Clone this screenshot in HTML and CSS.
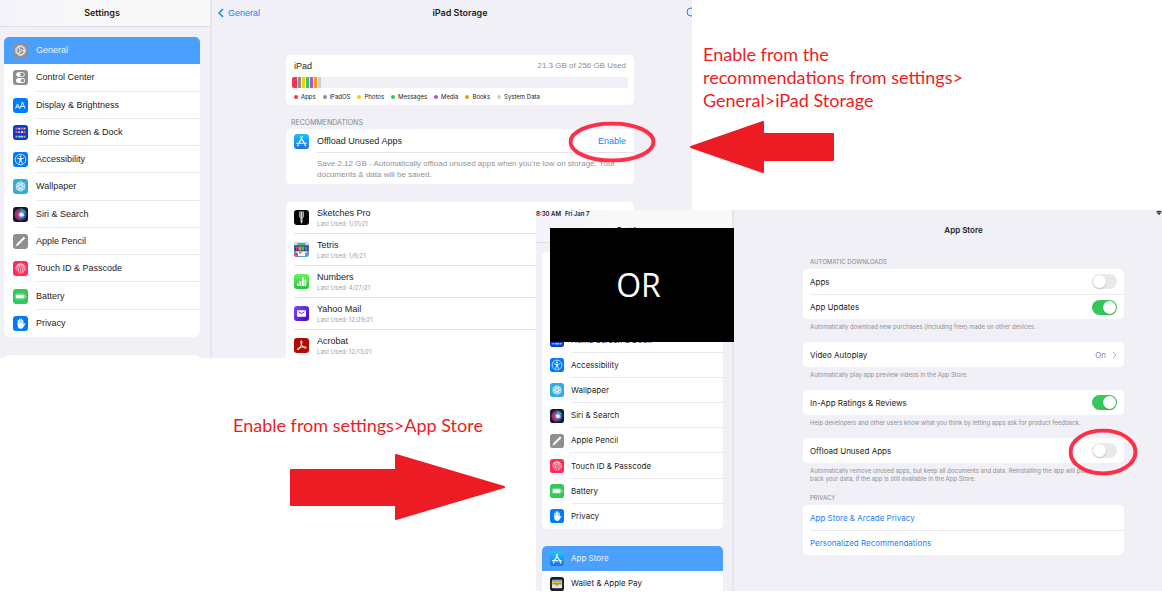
FILE: index.html
```html
<!DOCTYPE html>
<html lang="en">
<head>
<meta charset="utf-8">
<meta name="viewport" content="width=device-width, initial-scale=1">
<title>Offload Unused Apps</title>
<link rel="stylesheet" href="styles.css">
</head>
<body>
<svg class="sprite" aria-hidden="true">
  <defs>
    <linearGradient id="g-store" x1="0" y1="0" x2="0" y2="1"><stop offset="0" stop-color="#19c4fb"/><stop offset="1" stop-color="#1b70f2"/></linearGradient>
    <linearGradient id="g-num" x1="0" y1="0" x2="0" y2="1"><stop offset="0" stop-color="#6df05f"/><stop offset="1" stop-color="#1fc83a"/></linearGradient>
    <linearGradient id="g-mail" x1="0" y1="0" x2="1" y2="1"><stop offset="0" stop-color="#7a4bff"/><stop offset="1" stop-color="#4a00c8"/></linearGradient>
    <radialGradient id="g-siri" cx=".55" cy=".5" r=".6"><stop offset="0" stop-color="#fff"/><stop offset=".25" stop-color="#7fb6ee"/><stop offset=".55" stop-color="#3b4fae"/><stop offset="1" stop-color="#11162e"/></radialGradient>
    <symbol id="i-general" viewBox="0 0 30 30"><rect width="30" height="30" rx="6" fill="#8e8e93"/><circle cx="15" cy="15" r="10" fill="none" stroke="#fff" stroke-width="2" stroke-dasharray="2 1.14"/><circle cx="15" cy="15" r="8" fill="none" stroke="#fff" stroke-width="2"/><circle cx="15" cy="15" r="2.5" fill="none" stroke="#fff" stroke-width="1.5"/><path d="M17.5 15H23M13.8 12.8 11 8M13.8 17.2 11 22" stroke="#fff" stroke-width="1.7"/></symbol>
    <symbol id="i-control" viewBox="0 0 30 30"><rect width="30" height="30" rx="6" fill="#8e8e93"/><rect x="7" y="5" width="16" height="8" rx="4" fill="none" stroke="#fff" stroke-width="1.5"/><circle cx="11" cy="9" r="4" fill="#fff"/><rect x="6" y="16" width="18" height="10" rx="5" fill="#fff"/><circle cx="19" cy="21" r="3.4" fill="#8e8e93"/></symbol>
    <symbol id="i-display" viewBox="0 0 30 30"><rect width="30" height="30" rx="6" fill="#007aff"/><path d="m5 21 4-9 4 9M6.5 18h5M14 21l5-13 5 13M16 17h6.500" fill="none" stroke="#fff" stroke-width="1.8"/></symbol>
    <symbol id="i-home" viewBox="0 0 30 30"><rect width="30" height="30" rx="6" fill="#1238cf"/><g stroke-width="3.5"><path d="M5 7h4M21 14h4" stroke="#ff6a5c"/><path d="M10.500 7h4M16 14h4" stroke="#e9f0ff"/><path d="M16 7h4M5 14h4" stroke="#ff5aa8"/><path d="M21 7h4M10.500 14h4" stroke="#f5c343"/><path d="M5 23h4" stroke="#5ee57b"/><path d="M10.500 23h9.500" stroke="#7fd8ff"/><path d="M21 23h4" stroke="#ffa63d"/></g></symbol>
    <symbol id="i-access" viewBox="0 0 30 30"><rect width="30" height="30" rx="6" fill="#007aff"/><circle cx="15" cy="15" r="10.500" fill="none" stroke="#fff" stroke-width="1.500"/><circle cx="15" cy="9" r="1.800" fill="#fff"/><path d="M9 12.500 13.500 13.500h3L21 12.500M13.800 13.500v3.500L12 22.500M16.200 13.500v3.500L18 22.500M15 13v5" fill="none" stroke="#fff" stroke-width="1.700" stroke-linecap="round"/></symbol>
    <symbol id="i-wall" viewBox="0 0 30 30"><rect width="30" height="30" rx="6" fill="#35abdb"/><g fill="#fff" fill-opacity=".3" stroke="#fff" stroke-width="1.200"><circle cx="15" cy="9.500" r="4"/><circle cx="19.800" cy="12.200" r="4"/><circle cx="19.800" cy="17.800" r="4"/><circle cx="15" cy="20.500" r="4"/><circle cx="10.200" cy="17.800" r="4"/><circle cx="10.200" cy="12.200" r="4"/></g><circle cx="15" cy="15" r="2.500" fill="#35abdb" stroke="#fff"/></symbol>
    <symbol id="i-siri" viewBox="0 0 30 30"><rect width="30" height="30" rx="6" fill="#15182b"/><circle cx="15" cy="15" r="12.500" fill="url(#g-siri)"/><path d="M3 15C3 8 9 3 15 3c-4 4-4 8 0 12-3 4-2 8 1 12C9 27 3 22 3 15Z" fill="#e0246c" opacity=".65"/><path d="M15 3c7 0 11 5 12 10-4-3-8-3-12 1Z" fill="#30c7a8" opacity=".55"/><path d="m11 14 8-3 4 7-9 1Z" fill="#fff" opacity=".75"/></symbol>
    <symbol id="i-pencil" viewBox="0 0 30 30"><rect width="30" height="30" rx="6" fill="#8e8e93"/><path d="M5 25 8 19 21.500 5.500 24.500 8.500 11 22Z" fill="#fff"/></symbol>
    <symbol id="i-touch" viewBox="0 0 30 30"><rect width="30" height="30" rx="6" fill="#ff2d55"/><g fill="none" stroke="#fff" stroke-width="1.300" stroke-linecap="round"><path d="M7 10a10 10 0 0 1 16 0M5.500 15a9.500 9.500 0 0 1 19 0v3M8 19v-4a7 7 0 0 1 14 0c0 3 0 5-1.500 8M10.500 22c.8-2 .5-4 .5-7a4 4 0 0 1 8 0c0 4 0 6-2 9.500M15 15c0 4 0 6-1.500 9.500"/></g></symbol>
    <symbol id="i-battery" viewBox="0 0 30 30"><rect width="30" height="30" rx="6" fill="#34c759"/><rect x="4.500" y="10" width="19.500" height="10" rx="3" fill="none" stroke="#fff" stroke-opacity=".7"/><rect x="6" y="11.500" width="16.500" height="7" rx="1.500" fill="#fff"/><path d="M25.500 13v4c2-.8 2-3.200 0-4Z" fill="#fff"/></symbol>
    <symbol id="i-privacy" viewBox="0 0 30 30"><rect width="30" height="30" rx="6" fill="#007aff"/><path d="M10.500 17V9M13.500 16V6M16.500 16V6M19.500 17V8.500" stroke="#fff" stroke-width="2.300" stroke-linecap="round"/><path d="M9.300 14.500h11.400V18l2.300-3c1-1 2.200 0 1.500 1.200L21 22c-1.500 2.500-3 3.500-5.500 3.500-4 0-6.200-2.500-6.200-6Z" fill="#fff"/></symbol>
    <symbol id="i-store" viewBox="0 0 30 30"><rect width="30" height="30" rx="6" fill="url(#g-store)"/><path d="m16.500 6-7 12.500M13.500 6 21 19.500M5.500 18.500h11.500M20 18.500h4.500M8.500 21.500 7.500 23.500M22 21.500l1 2" stroke="#fff" stroke-width="2.400" stroke-linecap="round"/></symbol>
    <symbol id="i-wallet" viewBox="0 0 30 30"><rect width="30" height="30" rx="6" fill="#1c1c1e"/><rect x="4" y="6" width="22" height="18" rx="2" fill="#e9e3d5"/><path d="M5 8.500h20" stroke="#3fa3d8" stroke-width="3"/><path d="M5 11.500h20" stroke="#f7b92c" stroke-width="3"/><path d="M5 14.500h20" stroke="#5bbd58" stroke-width="3"/><path d="M12 16h6c0 2-1 3-3 3s-3-1-3-3Z" fill="#ef5a4c"/></symbol>
    <symbol id="i-sketch" viewBox="0 0 30 30"><rect width="30" height="30" rx="6" fill="#080808"/><path d="M10.500 3h9v10l-2.500 5v5l-2 5-2-5v-5l-2.500-5Z" fill="#d8d8d8"/><path d="M13 3v12M17 3v12M13 18h4" stroke="#333" stroke-width="1.200"/></symbol>
    <symbol id="i-tetris" viewBox="0 0 30 30"><rect width="30" height="30" rx="6" fill="#5b9fd0"/><path d="M0 6a6 6 0 0 1 6-6h18a6 6 0 0 1 6 6H0Z" fill="#cfe2e6"/><path d="M7 2h16v4H7Z" fill="#48b887"/><path d="M1 7h28v11H1Z" fill="#243a91"/><path d="M3 9h5v3H6.500v5H4v-5H3Z" fill="#e84a4c"/><path d="M9 9h5v8H9Z" fill="#f29a35"/><path d="M15 9h6v3l-2 5h-4Z" fill="#46c764"/><path d="M22 9h5v8h-5Z" fill="#a84ac9"/><path d="M3 19h24l-5 4v5H8v-5Z" fill="#f3f7fc"/><path d="M0 22h8v8H6a6 6 0 0 1-6-6Z" fill="#d65465"/><path d="M10 19h5v4h-5Z" fill="#e96d3a"/></symbol>
    <symbol id="i-numbers" viewBox="0 0 30 30"><rect width="30" height="30" rx="6" fill="url(#g-num)"/><path d="M6 19h3.500v5H6ZM11 14h3.500v10H11ZM16 7h3.500v17H16ZM21 11h3.500v13H21Z" fill="#fff"/></symbol>
    <symbol id="i-mail" viewBox="0 0 30 30"><rect width="30" height="30" rx="6" fill="url(#g-mail)"/><rect x="6" y="8.500" width="18" height="13" rx="1.500" fill="#fff"/><path d="m9 11.500 6 3.500 6-3.500" fill="none" stroke="#5a1fe0" stroke-width="2"/></symbol>
    <symbol id="i-acrobat" viewBox="0 0 30 30"><rect width="30" height="30" rx="6" fill="#b30b00"/><path d="M14.500 5.500c2 0 2 3 .5 7-1.500 4.500-4.500 10.500-7 11-2.500.2-1-3.500 6-5 7-1.800 11-1 10.500 1s-5 .5-8-4-4-10-2-10Z" fill="none" stroke="#fff" stroke-width="1.900"/></symbol>
  </defs>
</svg>

<main class="board">
  <section class="window window-storage" aria-label="iPad Storage">
    <nav class="sidebar" aria-label="Settings">
      <header class="sidebar-head"><h2>Settings</h2></header>
      <div class="group group-main">
        <a class="item selected" href="#"><svg class="icon"><use href="#i-general"/></svg><span>General</span></a>
        <a class="item" href="#"><svg class="icon"><use href="#i-control"/></svg><span>Control Center</span></a>
        <a class="item" href="#"><svg class="icon"><use href="#i-display"/></svg><span>Display &amp; Brightness</span></a>
        <a class="item" href="#"><svg class="icon"><use href="#i-home"/></svg><span>Home Screen &amp; Dock</span></a>
        <a class="item" href="#"><svg class="icon"><use href="#i-access"/></svg><span>Accessibility</span></a>
        <a class="item" href="#"><svg class="icon"><use href="#i-wall"/></svg><span>Wallpaper</span></a>
        <a class="item" href="#"><svg class="icon"><use href="#i-siri"/></svg><span>Siri &amp; Search</span></a>
        <a class="item" href="#"><svg class="icon"><use href="#i-pencil"/></svg><span>Apple Pencil</span></a>
        <a class="item" href="#"><svg class="icon"><use href="#i-touch"/></svg><span>Touch ID &amp; Passcode</span></a>
        <a class="item" href="#"><svg class="icon"><use href="#i-battery"/></svg><span>Battery</span></a>
        <a class="item" href="#"><svg class="icon"><use href="#i-privacy"/></svg><span>Privacy</span></a>
      </div>
      <div class="group group-next"></div>
    </nav>
    <div class="pane">
      <header class="pane-head">
        <a class="back" href="#"><svg viewBox="0 0 6 10"><path d="M5 1 1 5l4 4" fill="none" stroke="currentColor" stroke-width="1.500"/></svg>General</a>
        <h1>iPad Storage</h1>
        <button class="search" type="button" aria-label="Search"><svg viewBox="0 0 12 12"><circle cx="5" cy="5" r="4" fill="none" stroke="currentColor"/><path d="m8 8 3 3" stroke="currentColor"/></svg></button>
      </header>
      <div class="card usage">
        <div class="usage-top"><span>iPad</span><span class="muted">21.3 GB of 256 GB Used</span></div>
        <div class="bar"><i class="seg wide red"></i><i class="seg gray"></i><i class="seg yellow"></i><i class="seg green"></i><i class="seg purple"></i><i class="seg orange"></i><i class="seg silver"></i></div>
        <ul class="legend">
          <li><i class="dot red"></i>Apps</li><li><i class="dot gray"></i>iPadOS</li><li><i class="dot yellow"></i>Photos</li><li><i class="dot green"></i>Messages</li><li><i class="dot purple"></i>Media</li><li><i class="dot orange"></i>Books</li><li><i class="dot silver"></i>System Data</li>
        </ul>
      </div>
      <h3 class="label">RECOMMENDATIONS</h3>
      <div class="card offload">
        <svg class="icon"><use href="#i-store"/></svg>
        <div class="offload-body">
          <div class="offload-top"><span>Offload Unused Apps</span>
            <span class="marked"><button class="enable" type="button">Enable</button><svg class="ring ring-wide" viewBox="0 0 87 41"><ellipse cx="43.500" cy="20.500" rx="41.500" ry="18.500"/></svg></span>
          </div>
          <p>Save 2.12 GB - Automatically offload unused apps when you're low on storage. Your documents &amp; data will be saved.</p>
        </div>
      </div>
      <ul class="card apps">
        <li><svg class="icon"><use href="#i-sketch"/></svg><div><b>Sketches Pro</b><small>Last Used: 1/31/21</small></div></li>
        <li><svg class="icon"><use href="#i-tetris"/></svg><div><b>Tetris</b><small>Last Used: 1/8/21</small></div></li>
        <li><svg class="icon"><use href="#i-numbers"/></svg><div><b>Numbers</b><small>Last Used: 4/27/21</small></div></li>
        <li><svg class="icon"><use href="#i-mail"/></svg><div><b>Yahoo Mail</b><small>Last Used: 12/29/21</small></div></li>
        <li><svg class="icon"><use href="#i-acrobat"/></svg><div><b>Acrobat</b><small>Last Used: 12/13/21</small></div></li>
      </ul>
    </div>
  </section>

  <section class="window window-store" aria-label="App Store settings">
    <nav class="sidebar" aria-label="Settings">
      <header class="sidebar-head"><div class="status"><span>8:30 AM</span><span>Fri Jan 7</span></div><h2>Settings</h2></header>
      <div class="group group-main">
        <a class="item" href="#"><svg class="icon"><use href="#i-general"/></svg><span>General</span></a>
        <a class="item" href="#"><svg class="icon"><use href="#i-control"/></svg><span>Control Center</span></a>
        <a class="item" href="#"><svg class="icon"><use href="#i-display"/></svg><span>Display &amp; Brightness</span></a>
        <a class="item" href="#"><svg class="icon"><use href="#i-home"/></svg><span>Home Screen &amp; Dock</span></a>
        <a class="item" href="#"><svg class="icon"><use href="#i-access"/></svg><span>Accessibility</span></a>
        <a class="item" href="#"><svg class="icon"><use href="#i-wall"/></svg><span>Wallpaper</span></a>
        <a class="item" href="#"><svg class="icon"><use href="#i-siri"/></svg><span>Siri &amp; Search</span></a>
        <a class="item" href="#"><svg class="icon"><use href="#i-pencil"/></svg><span>Apple Pencil</span></a>
        <a class="item" href="#"><svg class="icon"><use href="#i-touch"/></svg><span>Touch ID &amp; Passcode</span></a>
        <a class="item" href="#"><svg class="icon"><use href="#i-battery"/></svg><span>Battery</span></a>
        <a class="item" href="#"><svg class="icon"><use href="#i-privacy"/></svg><span>Privacy</span></a>
      </div>
      <div class="group group-next">
        <a class="item selected" href="#"><svg class="icon"><use href="#i-store"/></svg><span>App Store</span></a>
        <a class="item" href="#"><svg class="icon"><use href="#i-wallet"/></svg><span>Wallet &amp; Apple Pay</span></a>
      </div>
    </nav>
    <div class="pane">
      <svg class="wifi" viewBox="0 0 14 10"><path d="M1 3.500a9 9 0 0 1 12 0M3.300 6a5.500 5.500 0 0 1 7.400 0" fill="none" stroke="#1c1c1e" stroke-width="2.400"/><path d="m4.500 7 2.500 3 2.500-3a3 3 0 0 0-5 0Z" fill="#1c1c1e"/></svg>
      <header class="pane-head"><h1>App Store</h1></header>
      <h3 class="label">AUTOMATIC DOWNLOADS</h3>
      <div class="card">
        <div class="row"><label for="apps">Apps</label><input class="toggle" type="checkbox" id="apps"></div>
        <div class="row"><label for="updates">App Updates</label><input class="toggle" type="checkbox" id="updates" checked></div>
      </div>
      <p class="note">Automatically download new purchases (including free) made on other devices.</p>
      <div class="card">
        <a class="row" href="#"><span>Video Autoplay</span><span class="value">On<svg viewBox="0 0 5 8"><path d="m1 1 3 3-3 3" fill="none" stroke="#b0b0b5"/></svg></span></a>
      </div>
      <p class="note">Automatically play app preview videos in the App Store.</p>
      <div class="card">
        <div class="row"><label for="ratings">In-App Ratings &amp; Reviews</label><input class="toggle" type="checkbox" id="ratings" checked></div>
      </div>
      <p class="note">Help developers and other users know what you think by letting apps ask for product feedback.</p>
      <div class="card">
        <div class="row"><label for="offload">Offload Unused Apps</label><span class="marked"><input class="toggle" type="checkbox" id="offload"><svg class="ring ring-round" viewBox="0 0 69 47"><ellipse cx="34.500" cy="23.500" rx="32.500" ry="21.500"/></svg></span></div>
      </div>
      <p class="note long">Automatically remove unused apps, but keep all documents and data. Reinstalling the app will place<br>back your data, if the app is still available in the App Store.</p>
      <h3 class="label">PRIVACY</h3>
      <div class="card">
        <a class="row link" href="#">App Store &amp; Arcade Privacy</a>
        <a class="row link" href="#">Personalized Recommendations</a>
      </div>
    </div>
  </section>

  <p class="divider">OR</p>
  <p class="caption caption-storage">Enable from the<br>recommendations from settings&gt;<br>General&gt;iPad Storage</p>
  <svg class="arrow arrow-left" viewBox="0 0 144 52" aria-hidden="true"><path d="M1 26 73 1v12h70v26H73v12Z"/></svg>
  <p class="caption caption-store">Enable from settings&gt;App Store</p>
  <svg class="arrow arrow-right" viewBox="0 0 216 66" aria-hidden="true"><path d="M1 16h105V1l108 32-108 32V51H1Z"/></svg>
</main>
</body>
</html>
```
FILE: styles.css
```css
* { box-sizing: border-box; }
body, h1, h2, h3, p, ul { margin: 0; padding: 0; }
body { background: #fff; color: #1c1c1e; font: 9px/12px Inter, "Liberation Sans", sans-serif; }
ul { list-style: none; }
a { color: inherit; text-decoration: none; }
button { border: 0; padding: 0; background: none; font: inherit; color: #1a82fb; }
h1, h2 { font-size: 9px; line-height: 12px; font-weight: 600; }
.sprite { position: absolute; width: 0; height: 0; }

.board { position: relative; min-height: 100vh; overflow: hidden; }
.window { position: absolute; display: flex; overflow: hidden; background: #f1f0f6; }
.window-storage { left: 0; top: 0; width: 692px; height: 358px; }
.window-store { left: 536px; right: 0; top: 210px; height: 381px; min-width: 560px; }

/* Sidebar */
.sidebar { flex: none; border-right: 2px solid #e6e5eb; }
.window-storage .sidebar { width: 212px; }
.window-store .sidebar { width: 198px; }
.sidebar-head { display: flex; flex-direction: column; align-items: center; border-bottom: 1px solid #dedde2; background: linear-gradient(100deg, #f4f3fc, #f8f8f8 40%); }
.window-storage .sidebar-head { padding: 7px 6px 7px 0; }
.window-store .sidebar-head { padding-bottom: 5px; }
.status { align-self: flex-start; display: flex; gap: 4px; font-size: 6px; line-height: 7px; font-weight: 600; }
.window-store .sidebar-head h2 { padding-top: 8px; }
.group { display: grid; grid-auto-rows: 1fr; overflow: hidden; border-radius: 5px; background: #fff; }
.window-storage .group { margin: 10px 10px 0 4px; }
.window-store .group { margin: 9px 9px 0 6px; }
.window-storage .group-main { min-height: 300px; }
.window-store .group-main { min-height: 277px; }
.window-storage .group-next { margin-top: 18px; min-height: 27px; }
.window-store .group-next { margin-top: 17px; min-height: 50px; }
.item { display: flex; align-items: center; gap: 8px; padding-left: 9px; }
.window-store .item { gap: 7px; padding-left: 8px; }
.item span { flex: 1; align-self: stretch; display: flex; align-items: center; border-bottom: 1px solid #e8e8eb; }
.item:last-child span, .item.selected span { border-color: transparent; }
.item.selected { background: #4ba0ff; color: #e9f3ff; }
.icon { flex: none; width: 15px; height: 15px; }
.window-store .icon { width: 14px; height: 14px; }
.window-store .sidebar, .window-store .row { font-size: 8px; }
.window-storage .item, .back, .usage-top, .offload, .apps b { font-family: "Liberation Sans", Arial, sans-serif; }

/* Detail panes */
.pane { position: relative; flex: 1; }
.window-storage .pane { padding: 0 58px 0 74px; }
.window-store .pane { padding: 0 38px 0 69px; }
.pane-head h1 { text-align: center; }
.window-storage .pane-head { padding: 7px 0 36px; }
.window-store .pane-head { padding: 14px 0 20px; }
.window-store h1 { font-size: 8px; }
.back { position: absolute; left: 6px; top: 7px; display: flex; align-items: center; gap: 4px; color: #1a82fb; }
.back svg { width: 6px; height: 10px; }
.search { position: absolute; right: -6px; top: 7px; }
.search svg { display: block; width: 12px; height: 12px; }
.wifi { position: absolute; right: 0; top: 0; width: 6px; height: 6px; }
.card { border-radius: 5px; background: #fff; }
.label { color: #86868b; font-size: 7px; line-height: 8px; font-weight: 400; }
.muted { color: #8e8e93; font-size: 8px; }

.usage { padding: 5px 6px 4px; }
.usage-top { display: flex; justify-content: space-between; padding: 0 2px; }
.bar { display: flex; gap: 1px; height: 11px; margin-top: 5px; overflow: hidden; border-radius: 2px; background: #f1f0f6; }
.seg { width: 3px; }
.seg.wide { width: 5px; }
.red { background: #ff2d55; }
.gray { background: #8e8e93; }
.yellow { background: #ffcc00; }
.green { background: #34c759; }
.purple { background: #af52de; }
.orange { background: #ff9500; }
.silver { background: #cfcfd3; }
.legend { display: flex; gap: 7px; margin-top: 4px; padding: 0 2px; font-size: 6px; line-height: 9px; }
.legend li { display: flex; align-items: center; gap: 3px; }
.dot { width: 4px; height: 4px; border-radius: 50%; }

.window-storage .label { margin: 14px 5px 2px; }
.offload { display: flex; gap: 8px; padding-left: 8px; }
.offload > .icon { margin-top: 5px; }
.offload-body { flex: 1; }
.offload-top { display: flex; align-items: center; justify-content: space-between; padding: 6px 8px 5px 0; border-bottom: 1px solid #e4e4e7; }
.offload p { padding: 5px 8px 4px 0; color: #929297; font-size: 8px; line-height: 11px; }
.enable { display: block; line-height: 12px; }
.marked { position: relative; display: flex; }
.ring { position: absolute; left: 50%; top: 60%; z-index: 1; transform: translate(-50%, -50%); pointer-events: none; fill: none; stroke: #ff2f47; stroke-width: 4; }
.ring-wide { width: 87px; height: 41px; }
.ring-round { left: 44%; width: 69px; height: 47px; }
.apps { margin-top: 18px; padding-left: 8px; }
.apps li { display: flex; align-items: center; gap: 8px; height: 32px; border-bottom: 1px solid #e4e4e7; }
.apps b, .apps small { display: block; }
.apps b { font-weight: 400; line-height: 11px; }
.apps small { color: #a3a3a8; font-size: 6px; line-height: 9px; }

.window-store .label { margin: 2px 7px 3px; font-size: 6px; }
.row { display: flex; align-items: center; justify-content: space-between; min-height: 25px; margin-left: 7px; padding-right: 7px; }
.row + .row { border-top: 1px solid #e8e8eb; }
.value { display: flex; align-items: center; gap: 6px; color: #8e8e93; }
.value svg { width: 5px; height: 8px; }
.link { color: #1a82fb; }
.note { margin: 4px 7px 11px; color: #8e8e93; font-size: 6px; line-height: 8px; }
.note.long { white-space: nowrap; }
.toggle { appearance: none; display: flex; width: 25px; height: 15px; margin: 0; padding: 1px; border-radius: 8px; background: #e9e9eb; }
.toggle::before { content: ""; width: 13px; height: 13px; border-radius: 50%; background: #fff; box-shadow: 0 1px 2px #0003; }
.toggle:checked { justify-content: flex-end; background: #34c759; }

/* Annotations */
.divider { position: absolute; left: 550px; top: 228px; display: grid; place-items: center; width: 184px; height: 114px; padding-right: 7px; background: #000; color: #fff; font: 32px/40px "Open Sans", "Noto Sans", sans-serif; }
.caption { position: absolute; color: #ed1c24; font: 18px/23px Lato, "Open Sans", sans-serif; white-space: nowrap; }
.caption-storage { left: 703px; top: 43px; }
.caption-store { left: 233px; top: 414px; }
.arrow { position: absolute; fill: #ed1c24; stroke: #ed1c24; stroke-width: 2; stroke-linejoin: round; }
.arrow-left { left: 690px; top: 121px; width: 144px; height: 52px; }
.arrow-right { left: 290px; top: 454px; width: 216px; height: 66px; }
```
